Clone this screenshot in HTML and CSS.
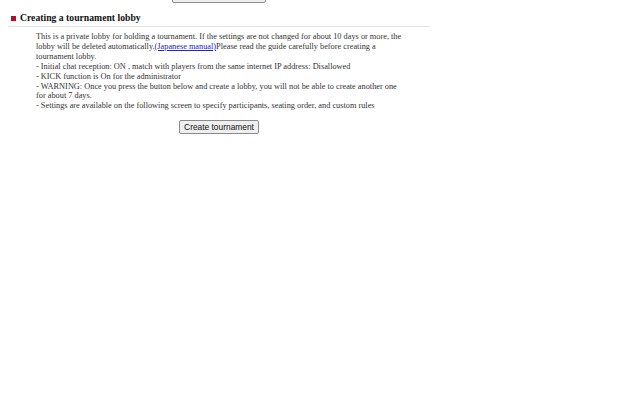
FILE: index.html
```html
<!DOCTYPE html>
<html>
<head>
<meta charset="utf-8">
<link rel="stylesheet" href="styles.css">
</head>
<body>
<div class="page">
  <div class="top-actions"><button class="btn btn-top" aria-label="Back"></button></div>
  <h2 class="section-title"><span class="marker"></span>Creating a tournament lobby</h2>
  <div class="desc">
    <p>This is a private lobby for holding a tournament. If the settings are not changed for about 10 days or more, the lobby will be deleted automatically.<a href="#">(Japanese manual)</a>Please read the guide carefully before creating a tournament lobby.</p>
    <p>- Initial chat reception: ON , match with players from the same internet IP address: Disallowed</p>
    <p>- KICK function is On for the administrator</p>
    <p>- WARNING: Once you press the button below and create a lobby, you will not be able to create another one for about 7 days.</p>
    <p>- Settings are available on the following screen to specify participants, seating order, and custom rules</p>
  </div>
  <div class="actions"><button class="btn">Create tournament</button></div>
</div>
</body>
</html>
```
FILE: styles.css
```css
html, body { margin: 0; padding: 0; background: #fff; }
body { font-family: "Liberation Serif", "Times New Roman", serif; color: #222; }
.page { width: 422px; margin-left: 8px; }
.top-actions { display: flex; justify-content: center; height: 3px; overflow: hidden; align-items: flex-end; }
.btn {
  font-family: "Liberation Sans", Arial, sans-serif;
  font-size: 8.4px;
  color: #111;
  background: #efefef;
  border: 1px solid #8a8a8a;
  border-radius: 2px;
  padding: 1px 4px;
  height: 14px;
  line-height: 10px;
}
.btn-top { width: 94px; }
.section-title {
  margin: 9px 0 0 0;
  font-size: 9.7px;
  font-weight: bold;
  color: #111;
  display: flex;
  align-items: center;
  padding-bottom: 2px;
  border-bottom: 1px solid #e2e2e2;
  line-height: 12px;
}
.marker { width: 5px; height: 5px; background: #b0102a; margin: 0 4px 0 3px; }
.desc { padding: 5px 24px 0 28px; font-size: 8.3px; line-height: 9.9px; color: #333; }
.desc p { margin: 0; }
.desc a { color: #2222cc; text-decoration: underline; }
.actions { display: flex; justify-content: center; margin-top: 9px; }
```
